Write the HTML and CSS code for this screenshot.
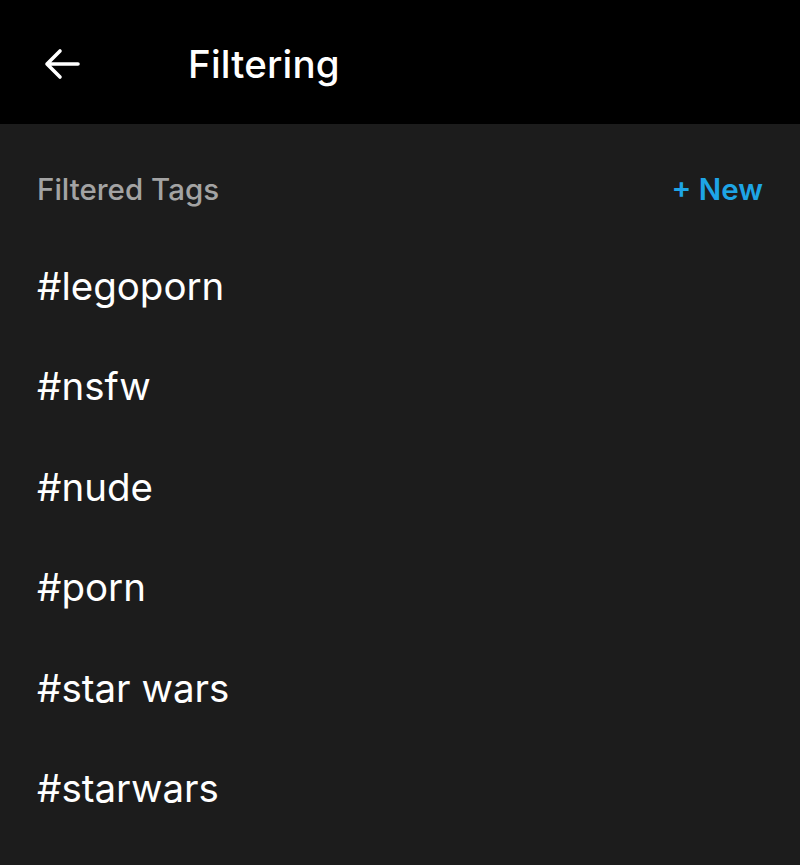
FILE: index.html
```html
<!DOCTYPE html>
<html>
<head>
<meta charset="utf-8">
<link rel="stylesheet" href="styles.css">
</head>
<body>
<header class="topbar">
  <svg class="back" width="38" height="32" viewBox="0 0 38 32" fill="none" stroke="#fff" stroke-width="3.6" stroke-linecap="round" stroke-linejoin="round">
    <path d="M35 16H4M17 3L4 16l13 13"/>
  </svg>
  <h1 class="title">Filtering</h1>
</header>
<main class="content">
  <div class="section-head">
    <span class="section-title">Filtered Tags</span>
    <span class="new">+ New</span>
  </div>
  <ul class="tags">
    <li>#legoporn</li>
    <li>#nsfw</li>
    <li>#nude</li>
    <li>#porn</li>
    <li>#star wars</li>
    <li>#starwars</li>
  </ul>
</main>
</body>
</html>
```
FILE: styles.css
```css
html, body {
  margin: 0;
  padding: 0;
  background: #1c1c1c;
  height: 100%;
}
body {
  font-family: "Inter", "Roboto", sans-serif;
  color: #fff;
}
.topbar {
  background: #000;
  height: 124px;
  display: flex;
  align-items: center;
  padding-left: 43px;
  box-sizing: border-box;
}
.back {
  flex: none;
  margin-top: 3px;
}
.title {
  margin: 4px 0 0 107px;
  font-size: 38.5px;
  font-weight: 500;
  letter-spacing: 0.2px;
}
.content {
  padding: 0 37px;
}
.section-head {
  display: flex;
  justify-content: space-between;
  align-items: center;
  height: 132px;
  margin-top: -1px;
}
.section-title {
  color: #a3a3a3;
  font-size: 29.5px;
  font-weight: 500;
}
.new {
  color: #1ea5e6;
  font-size: 29.5px;
  font-weight: 600;
}
.tags {
  list-style: none;
  margin: -19px 0 0;
  padding: 0;
}
.tags li {
  font-size: 38.5px;
  height: 100.4px;
  line-height: 100px;
}
```
